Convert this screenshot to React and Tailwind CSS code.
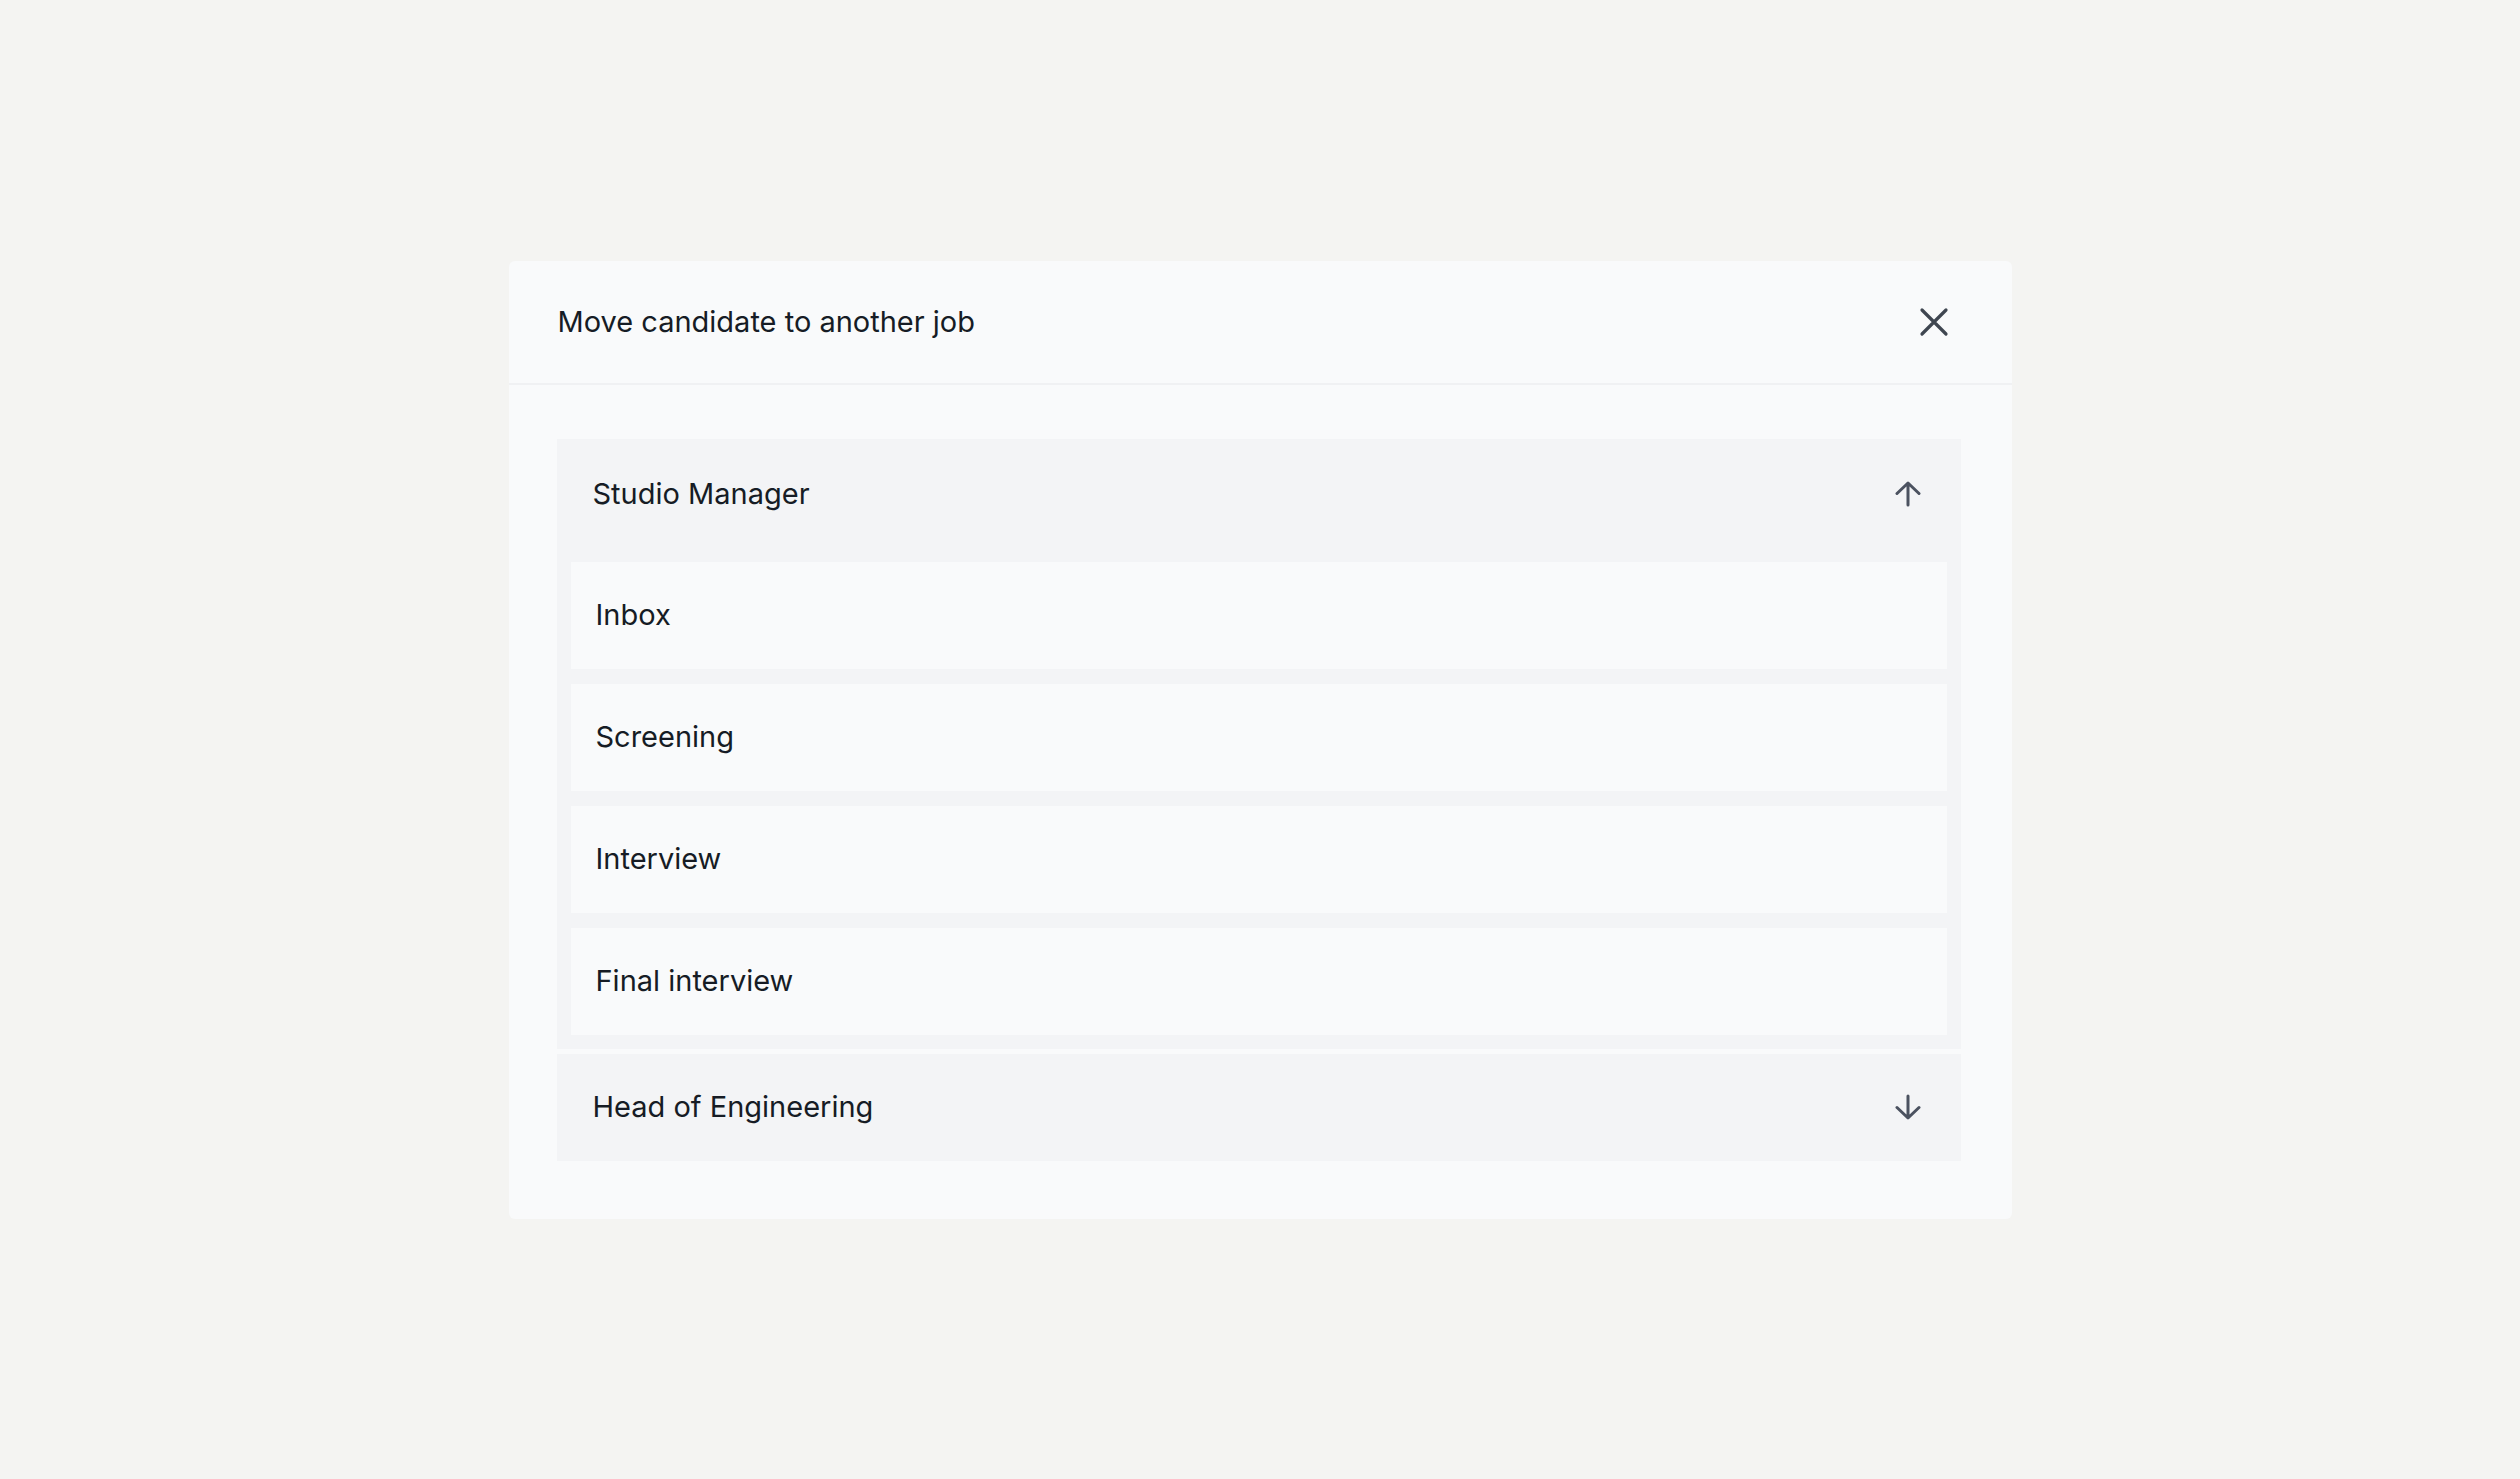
import React from "react";

function CloseIcon() {
  return (
    <svg width="30" height="30" viewBox="0 0 30 30" fill="none" stroke="#3f4650" strokeWidth="3.2" strokeLinecap="round">
      <path d="M3 3 L27 27 M27 3 L3 27" />
    </svg>
  );
}

function ArrowIcon({ up }) {
  return (
    <svg width="26" height="26" viewBox="0 0 26 26" fill="none" stroke="#4b5260" strokeWidth="3" strokeLinecap="round" strokeLinejoin="round">
      {up ? (
        <path d="M13 24 V2.5 M2 12.5 L13 2 L24 12.5" />
      ) : (
        <path d="M13 2 V23.5 M2 13.5 L13 24 L24 13.5" />
      )}
    </svg>
  );
}

const stages = ["Inbox", "Screening", "Interview", "Final interview"];

export default function App() {
  return (
    <div
      className="min-h-screen w-full flex items-center justify-center bg-[#f4f4f2] text-[#161c25]"
      style={{ fontFamily: "Inter, 'Liberation Sans', sans-serif" }}
    >
      <div className="w-[1503px] bg-[#f9fafb] rounded-[6px] flex flex-col">
        <div className="h-[124px] flex items-center justify-between pl-[49px] pr-[63px] border-b-2 border-[#f0f1f3]">
          <span className="text-[29px]">Move candidate to another job</span>
          <CloseIcon />
        </div>
        <div className="pl-[48px] pr-[51px] pt-[54px] pb-[58px] flex flex-col gap-[5px]">
          <div className="bg-[#f3f4f6] flex flex-col">
            <div className="h-[110px] flex items-center justify-between pl-[36px] pr-[40px]">
              <span className="text-[29px]">Studio Manager</span>
              <ArrowIcon up />
            </div>
            <div className="px-[14px] pt-[13px] pb-[14px] flex flex-col gap-[15px]">
              {stages.map((s) => (
                <div key={s} className="h-[107px] bg-[#f9fafb] flex items-center pl-[25px]">
                  <span className="text-[29px]">{s}</span>
                </div>
              ))}
            </div>
          </div>
          <div className="bg-[#f3f4f6] h-[107px] flex items-center justify-between pl-[36px] pr-[40px]">
            <span className="text-[29px]">Head of Engineering</span>
            <ArrowIcon />
          </div>
        </div>
      </div>
    </div>
  );
}
